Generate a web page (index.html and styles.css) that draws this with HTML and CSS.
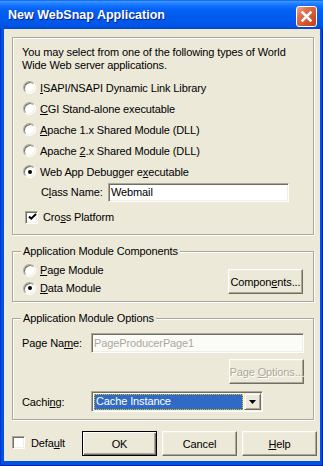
FILE: index.html
```html
<!DOCTYPE html>
<html>
<head>
<meta charset="utf-8">
<link rel="stylesheet" href="styles.css">
</head>
<body>
<div class="window">
  <div class="titlebar">
    <span class="title">New WebSnap Application</span>
    <span class="close"><svg width="11" height="11" viewBox="0 0 11 11"><path d="M1.5 1.5 L9.5 9.5 M9.5 1.5 L1.5 9.5" stroke="#fff" stroke-width="2.5" stroke-linecap="square"/></svg></span>
  </div>
  <div class="client">
    <div class="group g1">
      <p class="intro">You may select from one of the following types of World<br>Wide Web server applications.</p>
      <div class="opts">
        <div class="opt"><span class="radio"></span><span><u>I</u>SAPI/NSAPI Dynamic Link Library</span></div>
        <div class="opt"><span class="radio"></span><span><u>C</u>GI Stand-alone executable</span></div>
        <div class="opt"><span class="radio"></span><span><u>A</u>pache 1.x Shared Module (DLL)</span></div>
        <div class="opt"><span class="radio"></span><span>Apache <u>2</u>.x Shared Module (DLL)</span></div>
        <div class="opt"><span class="radio on"></span><span>Web App Debugger e<u>x</u>ecutable</span></div>
      </div>
      <div class="classrow"><span class="lbl">C<u>l</u>ass Name:</span><span class="edit">Webmail</span></div>
      <div class="crossrow"><span class="checkbox"><svg width="9" height="9" viewBox="0 0 9 9"><path d="M1 3.5 L3.2 5.7 L8 1" fill="none" stroke="#000" stroke-width="2"/></svg></span><span>Cro<u>s</u>s Platform</span></div>
    </div>

    <fieldset class="group g2">
      <legend>Application Module Components</legend>
      <div class="g2row">
        <div class="radios">
          <div class="opt sm"><span class="radio"></span><span><u>P</u>age Module</span></div>
          <div class="opt sm"><span class="radio on"></span><span><u>D</u>ata Module</span></div>
        </div>
        <span class="btn comp"><span>Compon<u>e</u>nts...</span></span>
      </div>
    </fieldset>

    <fieldset class="group g3">
      <legend>Application Module Options</legend>
      <div class="field"><span class="lbl">Page Na<u>m</u>e:</span><span class="edit dis">PageProducerPage1</span></div>
      <div class="btnrow"><span class="btn disabled popt"><span>Page <u>O</u>ptions...</span></span></div>
      <div class="field cache"><span class="lbl">Cachi<u>n</u>g:</span>
        <span class="combo"><span class="sel">Cache Instance</span><span class="drop"><svg width="7" height="4" viewBox="0 0 7 4"><path d="M0 0 H7 L3.5 4 Z" fill="#000"/></svg></span></span>
      </div>
    </fieldset>

    <div class="footer">
      <div class="chkwrap"><span class="checkbox"></span><span>Defa<u>u</u>lt</span></div>
      <div class="buttons">
        <span class="btn def"><span>OK</span></span>
        <span class="btn"><span>Cancel</span></span>
        <span class="btn"><span><u>H</u>elp</span></span>
      </div>
    </div>
  </div>
</div>
</body>
</html>
```
FILE: styles.css
```css
* { box-sizing: border-box; }
html, body { margin: 0; padding: 0; }
body {
  width: 323px;
  height: 466px;
  overflow: hidden;
  font-family: "Liberation Sans", Arial, sans-serif;
  font-size: 11px;
  letter-spacing: -0.12px;
  color: #000;
}
u { text-decoration: underline; text-underline-offset: 1px; }

.window {
  width: 323px;
  height: 466px;
  display: flex;
  flex-direction: column;
  background: #0052E0;
  box-shadow: inset 1px 0 0 #0831D9, inset -1px 0 0 #001EA0, inset 0 -1px 0 #001EA0;
}

.titlebar {
  height: 29px;
  flex: none;
  display: flex;
  align-items: center;
  justify-content: space-between;
  padding: 0 6px 0 8px;
  background: linear-gradient(180deg, #0058EE 0%, #3D95FF 5%, #2A86FF 10%, #1473FF 18%, #0463F4 32%, #005AEE 60%, #0056E8 85%, #0048D0 100%);
}
.title {
  color: #fff;
  font-weight: bold;
  font-size: 12.5px;
  letter-spacing: 0;
  text-shadow: 1px 1px 0 #0A1E8C;
  padding-top: 1px;
}
.close {
  width: 21px;
  height: 21px;
  border: 1px solid #fff;
  border-radius: 3px;
  background: linear-gradient(135deg, #F0A58A 0%, #E2714F 30%, #D2552F 65%, #C0401A 100%);
  display: flex;
  align-items: center;
  justify-content: center;
  margin-top: 3px;
}

.client {
  flex: 1;
  margin: 0 3px 5px 4px;
  background: #ECE9D8;
  display: flex;
  flex-direction: column;
  padding: 8px 6px 5px 8px;
}

.group {
  border: 1px solid #ACA899;
  box-shadow: inset 1px 1px 0 #fff, 1px 1px 0 #fff;
  margin: 0;
  min-width: 0;
}
legend {
  padding: 0 2px;
  margin-left: -1px;
  line-height: 13px;
  font-size: 11px;
  background: #ECE9D8;
}

.g1 {
  height: 198px;
  flex: none;
  padding: 8px 9px 0 9px;
}
.intro { margin: 0; line-height: 13px; }
.opts { margin-top: 5px; }
.opt {
  height: 21px;
  display: flex;
  align-items: center;
  gap: 4px;
}
.opt.sm { height: 18px; }
.radio {
  width: 13px;
  height: 13px;
  margin-left: 1px;
  border-radius: 50%;
  background: #fff;
  border: 1px solid;
  border-color: #ACA899 #fff #fff #ACA899;
  box-shadow: inset 1px 1px 0 #716F64, inset -1px -1px 0 #F1EFE2;
  display: flex;
  align-items: center;
  justify-content: center;
  flex: none;
}
.radio.on::after {
  content: "";
  width: 4px;
  height: 4px;
  border-radius: 50%;
  background: #000;
}

.classrow {
  height: 20px;
  display: flex;
  align-items: center;
  padding-left: 19px;
}
.classrow .lbl { width: 67px; }
.classrow .edit { width: 181px; }

.edit {
  height: 19px;
  background: #fff;
  border: 1px solid;
  border-color: #ACA899 #fff #fff #ACA899;
  box-shadow: inset 1px 1px 0 #716F64, inset -1px -1px 0 #F1EFE2;
  padding-left: 2px;
  line-height: 17px;
  white-space: nowrap;
}
.edit.dis { color: #ACA899; background: #FBFBF8; flex: 1; height: 20px; line-height: 18px; }

.crossrow {
  margin-top: 4px;
  height: 22px;
  display: flex;
  align-items: center;
  gap: 5px;
  padding-left: 3px;
}
.checkbox {
  width: 13px;
  height: 13px;
  background: #fff;
  border: 1px solid;
  border-color: #ACA899 #fff #fff #ACA899;
  box-shadow: inset 1px 1px 0 #716F64, inset -1px -1px 0 #F1EFE2;
  display: flex;
  align-items: center;
  justify-content: center;
  flex: none;
}
.checkbox svg { margin-left: 1px; margin-top: 1px; }

.g2 {
  margin-top: 10px;
  height: 57px;
  flex: none;
  padding: 3px 10px 4px 9px;
}
.g2row { display: flex; justify-content: space-between; align-items: flex-start; }
.comp { width: 83px; margin-top: 8px; }

.g3 {
  margin-top: 10px;
  height: 108px;
  flex: none;
  padding: 8px 9px 7px 9px;
}
.field { display: flex; align-items: center; height: 20px; }
.field .lbl { width: 69px; flex: none; }
.btnrow { display: flex; justify-content: flex-end; margin-top: 6px; }
.popt { width: 83px; }
.field.cache { margin-top: 7px; height: 21px; }

.combo {
  width: 172px;
  height: 21px;
  display: flex;
  background: #fff;
  border: 1px solid;
  border-color: #ACA899 #fff #fff #ACA899;
  box-shadow: inset 1px 1px 0 #716F64, inset -1px -1px 0 #F1EFE2;
  padding: 2px 1px 1px 2px;
  gap: 1px;
}
.sel {
  flex: 1;
  background: #316AC5;
  color: #fff;
  outline: 1px dotted #E8C800;
  outline-offset: -1px;
  padding-left: 2px;
  line-height: 15px;
}
.drop {
  width: 17px;
  flex: none;
  margin-top: -1px;
  background: #ECE9D8;
  border: 1px solid;
  border-color: #F1EFE2 #716F64 #716F64 #F1EFE2;
  box-shadow: inset 1px 1px 0 #fff, inset -1px -1px 0 #ACA899;
  display: flex;
  align-items: center;
  justify-content: center;
}

.btn {
  height: 25px;
  width: 75px;
  display: flex;
  align-items: center;
  justify-content: center;
  background: #ECE9D8;
  border: 1px solid;
  border-color: #fff #716F64 #716F64 #fff;
  box-shadow: inset -1px -1px 0 #ACA899, inset 1px 1px 0 #F1EFE2;
  flex: none;
  white-space: nowrap;
}
.btn.def {
  border-color: #000;
  box-shadow: inset 1px 1px 0 #fff, inset -1px -1px 0 #716F64, inset -2px -2px 0 #ACA899;
}
.btn.disabled {
  color: #ACA899;
  text-shadow: 1px 1px 0 #fff;
}

.footer {
  margin-top: 11px;
  height: 25px;
  display: flex;
  align-items: center;
  margin-right: -3px;
}
.chkwrap { display: flex; align-items: center; gap: 6px; margin-top: -2px; }
.buttons { margin-left: auto; display: flex; gap: 5px; }
```
